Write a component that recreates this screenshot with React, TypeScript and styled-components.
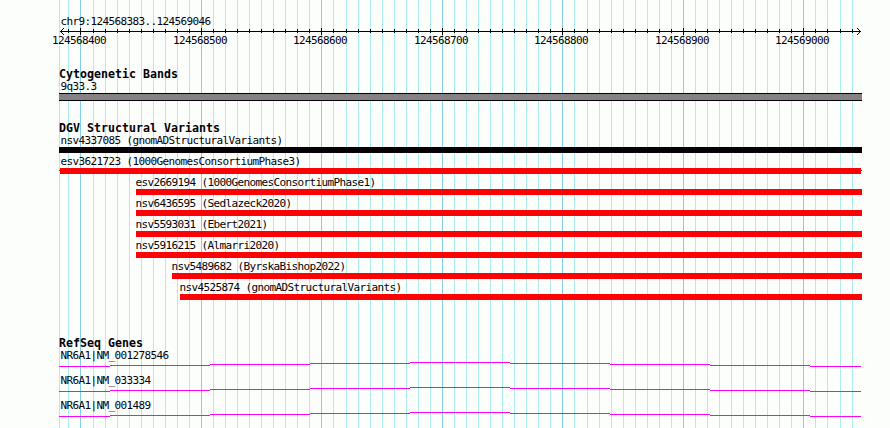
import styled, { createGlobalStyle } from 'styled-components';

const REGION = { chrom: 'chr9', start: 124568383, end: 124569046 };
const WIDTH = 890;
const HEIGHT = 428;
const LEFT = 59;
const RIGHT = 862;

const toX = (pos: number) =>
  Math.floor(60.5 + ((pos - REGION.start) * 800) / (REGION.end - REGION.start + 1));

const ticks = Array.from({ length: 66 }, (_, i) => {
  const pos = 124568390 + i * 10;
  return { pos, x: toX(pos), major: pos % 100 === 0 };
});

const variants = [
  { id: 'nsv4337085', study: 'gnomADStructuralVariants', x: 59, color: '#040004' },
  { id: 'esv3621723', study: '1000GenomesConsortiumPhase3', x: 60, color: '#fc0204', open: true },
  { id: 'esv2669194', study: '1000GenomesConsortiumPhase1', x: 136, color: '#fc0204' },
  { id: 'nsv6436595', study: 'Sedlazeck2020', x: 136, color: '#fc0204' },
  { id: 'nsv5593031', study: 'Ebert2021', x: 136, color: '#fc0204' },
  { id: 'nsv5916215', study: 'Almarri2020', x: 136, color: '#fc0204' },
  { id: 'nsv5489682', study: 'ByrskaBishop2022', x: 172, color: '#fc0204' },
  { id: 'nsv4525874', study: 'gnomADStructuralVariants', x: 180, color: '#fc0204' },
];

const genes = ['NR6A1|NM_001278546', 'NR6A1|NM_033334', 'NR6A1|NM_001489'];

// the intron line climbs one pixel per step to the middle and back down
const intronSteps = [59, 110, 210, 310, 410, 510, 610, 710, 810, 861];
const intronLevels = [4, 3, 2, 1, 0, 1, 2, 3, 4];

const GlobalStyle = createGlobalStyle`
  body {
    margin: 0;
    background: #fcfefc;
    overflow: hidden;
  }
`;

const Browser = styled.main`
  position: relative;
  width: ${WIDTH}px;
  height: ${HEIGHT}px;
  overflow: hidden;
  color: #040004;
  background: #fcfefc;
  font-family: 'DejaVu Sans Mono', 'Liberation Mono', monospace;
`;

const GridLines = styled.svg`
  position: absolute;
  inset: 0;
  display: block;
`;

const Tracks = styled.div`
  position: relative;
  display: flex;
  flex-direction: column;
  padding-top: 13px;
`;

const Label = styled.div<{ $x?: number }>`
  height: 15px;
  margin-left: ${({ $x = 60.5 }) => $x}px;
  font-size: 11px;
  line-height: 18px;
  letter-spacing: -0.623px;
  white-space: pre;
`;

const Title = styled.h2`
  height: 10px;
  margin: 0 0 0 59px;
  font-size: 11.6px;
  line-height: 12px;
  letter-spacing: 0.016px;
  font-weight: bold;
  white-space: pre;
`;

const Axis = styled.svg`
  display: block;
  height: 21px;
  margin-top: -1px;

  text {
    font-size: 11px;
    letter-spacing: -0.623px;
  }
`;

const Track = styled.section<{ $gap: number }>`
  display: flex;
  flex-direction: column;
  margin-top: ${({ $gap }) => $gap}px;
`;

const Band = styled.div`
  box-sizing: border-box;
  width: ${RIGHT - LEFT}px;
  height: 8px;
  margin-left: ${LEFT}px;
  border: solid #040004;
  border-width: 1px 0;
  background: #848284;
`;

const Row = styled.div`
  height: 21px;
`;

const Bar = styled.div<{ $x: number; $color: string }>`
  width: ${({ $x }) => RIGHT - $x}px;
  height: 6px;
  margin-left: ${({ $x }) => $x}px;
  background: ${({ $color }) => $color};
`;

const OpenBar = styled.svg`
  display: block;
`;

const GeneRow = styled.div`
  height: 25px;
`;

const Intron = styled.svg`
  display: block;
`;

function Ruler() {
  return (
    <Axis width={WIDTH} height={21} viewBox="0 27 890 21" shapeRendering="crispEdges" fill="#040004">
      <rect x={60} y={31} width={801} height={1} />
      {ticks.map(({ pos, x, major }) => (
        <rect key={pos} x={x} y={major ? 28 : 29} width={1} height={major ? 7 : 4} />
      ))}
      {[-3, -2, -1, 1, 2, 3].map((d) => (
        <g key={d}>
          <rect x={60 + Math.abs(d)} y={31 + d} width={1} height={1} />
          <rect x={860 - Math.abs(d)} y={31 + d} width={1} height={1} />
        </g>
      ))}
      {ticks
        .filter((tick) => tick.major)
        .map(({ pos, x }) => (
          <text key={pos} x={x - 28} y={44}>
            {pos}
          </text>
        ))}
    </Axis>
  );
}

export default function App() {
  return (
    <Browser>
      <GlobalStyle />
      <GridLines width={WIDTH} height={HEIGHT} shapeRendering="crispEdges">
        <rect x={LEFT} y={0} width={1} height={HEIGHT} fill="#aceeec" />
        {ticks.map(({ pos, x, major }) => (
          <rect key={pos} x={x} y={0} width={1} height={HEIGHT} fill={major ? '#84cee9' : '#aceeec'} />
        ))}
      </GridLines>
      <Tracks>
        <Label>{`${REGION.chrom}:${REGION.start}..${REGION.end}`}</Label>
        <Ruler />
        <Track $gap={20}>
          <Title>Cytogenetic Bands</Title>
          <Label>9q33.3</Label>
          <Band />
        </Track>
        <Track $gap={21}>
          <Title>DGV Structural Variants</Title>
          {variants.map(({ id, study, x, color, open }) => (
            <Row key={id}>
              <Label $x={x > 60 ? x - 0.5 : 60.5}>{`${id} (${study})`}</Label>
              {open ? (
                <OpenBar width={WIDTH} height={6} shapeRendering="crispEdges" fill={color}>
                  <rect x={LEFT} y={2} width={RIGHT - LEFT} height={1} />
                  <rect x={x} y={0} width={RIGHT - 1 - x} height={6} />
                </OpenBar>
              ) : (
                <Bar $x={x} $color={color} />
              )}
            </Row>
          ))}
        </Track>
        <Track $gap={37}>
          <Title>RefSeq Genes</Title>
          {genes.map((gene) => (
            <GeneRow key={gene}>
              <Label>{gene}</Label>
              <Intron width={WIDTH} height={5} shapeRendering="crispEdges" fill="#fc02fc">
                {intronLevels.map((y, i) => (
                  <rect key={i} x={intronSteps[i]} y={y} width={intronSteps[i + 1] - intronSteps[i]} height={1} />
                ))}
              </Intron>
            </GeneRow>
          ))}
        </Track>
      </Tracks>
    </Browser>
  );
}
